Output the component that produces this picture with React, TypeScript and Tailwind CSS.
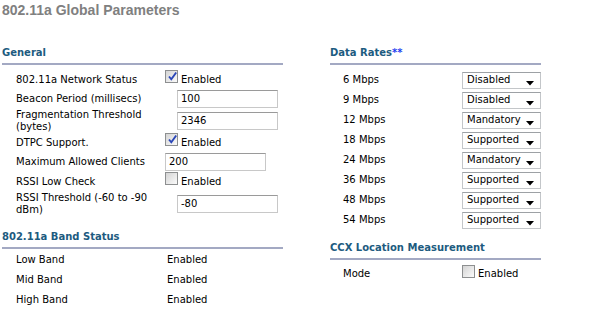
const heading = "font-bold text-[#1d5b80] text-[10px] leading-[12px] pb-[4px] border-b-2 border-[#a3a9c3]";

function CheckBox({ checked }: { checked?: boolean }) {
  return (
    <span className="relative w-[13px] h-[13px] mb-[6px] border border-[#8d8f90] bg-gradient-to-br from-[#d4d4d4] to-[#fbfbfb] shrink-0">
      {checked && (
        <svg className="absolute left-[1px] top-[0px]" width="11" height="11" viewBox="0 0 11 11">
          <path d="M2 5.5 L4.3 8.3 L9.2 1.5" fill="none" stroke="#2a46b8" strokeWidth="1.9" />
        </svg>
      )}
    </span>
  );
}

function Check({ checked }: { checked?: boolean }) {
  return (
    <div className="flex items-center">
      <CheckBox checked={checked} />
      <span className="ml-[3px]">Enabled</span>
    </div>
  );
}

function Field({ value, wide }: { value: string; wide?: boolean }) {
  return (
    <div
      className={`${wide ? "ml-[12px]" : ""} w-[101px] h-[18px] border border-[#c8c8c8] border-t-[#9a9a9a] flex items-center px-[3px]`}
    >
      {value}
    </div>
  );
}

function Select({ value }: { value: string }) {
  return (
    <div className="w-[79px] h-[17px] border border-[#c3c6c9] border-t-[#9da1a5] flex items-center justify-between pl-[4px] pr-[6px]">
      <span>{value}</span>
      <svg width="8" height="5" viewBox="0 0 8 5" className="mt-[6px]">
        <path d="M0 0 H8 L4 4.5 Z" fill="#000" />
      </svg>
    </div>
  );
}

const rates: [string, string][] = [
  ["6 Mbps", "Disabled"],
  ["9 Mbps", "Disabled"],
  ["12 Mbps", "Mandatory"],
  ["18 Mbps", "Supported"],
  ["24 Mbps", "Mandatory"],
  ["36 Mbps", "Supported"],
  ["48 Mbps", "Supported"],
  ["54 Mbps", "Supported"],
];

export default function App() {
  return (
    <div className="w-[590px] h-[315px] bg-white text-black text-[10px] leading-[12px] font-['DejaVu_Sans',sans-serif] overflow-hidden">
      <div className="pl-[2px] pt-[1px] h-[47px] font-['Liberation_Sans',sans-serif] font-bold text-[14px] leading-[18px] text-[#808080]">
        802.11a Global Parameters
      </div>

      <div className="flex">
        {/* left column */}
        <div className="ml-[2px] w-[281px]">
          <div className={heading}>General</div>
          <div className="pl-[14px] pt-[5px]">
            <div className="flex items-center h-[19px]">
              <div className="w-[149px]">802.11a Network Status</div>
              <Check checked />
            </div>
            <div className="flex items-center h-[19px]">
              <div className="w-[149px]">Beacon Period (millisecs)</div>
              <Field value="100" wide />
            </div>
            <div className="flex items-center h-[25px]">
              <div className="w-[149px]">Fragmentation Threshold (bytes)</div>
              <Field value="2346" wide />
            </div>
            <div className="flex items-center h-[19px]">
              <div className="w-[149px]">DTPC Support.</div>
              <Check checked />
            </div>
            <div className="flex items-center h-[20px]">
              <div className="w-[149px]">Maximum Allowed Clients</div>
              <Field value="200" />
            </div>
            <div className="flex items-center h-[19px]">
              <div className="w-[149px]">RSSI Low Check</div>
              <Check />
            </div>
            <div className="flex items-center h-[26px]">
              <div className="w-[149px]">RSSI Threshold (-60 to -90 dBm)</div>
              <Field value="-80" wide />
            </div>
          </div>

          <div className={`${heading} mt-[14px]`}>802.11a Band Status</div>
          <div className="pl-[14px] pt-[1px]">
            {["Low Band", "Mid Band", "High Band"].map((b) => (
              <div key={b} className="flex items-center h-[20px]">
                <div className="w-[151px]">{b}</div>
                <div>Enabled</div>
              </div>
            ))}
          </div>
        </div>

        {/* right column */}
        <div className="ml-[47px] w-[211px]">
          <div className={heading}>
            Data Rates<span className="text-[#1f3ff0]">**</span>
          </div>
          <div className="pl-[13px] pt-[5px]">
            {rates.map(([r, v]) => (
              <div key={r} className="flex items-center h-[20px]">
                <div className="w-[119px]">{r}</div>
                <Select value={v} />
              </div>
            ))}
          </div>

          <div className={`${heading} mt-[12px]`}>CCX Location Measurement</div>
          <div className="pl-[13px] pt-[4px]">
            <div className="flex items-center h-[20px]">
              <div className="w-[119px]">Mode</div>
              <Check />
            </div>
          </div>
        </div>
      </div>
    </div>
  );
}
